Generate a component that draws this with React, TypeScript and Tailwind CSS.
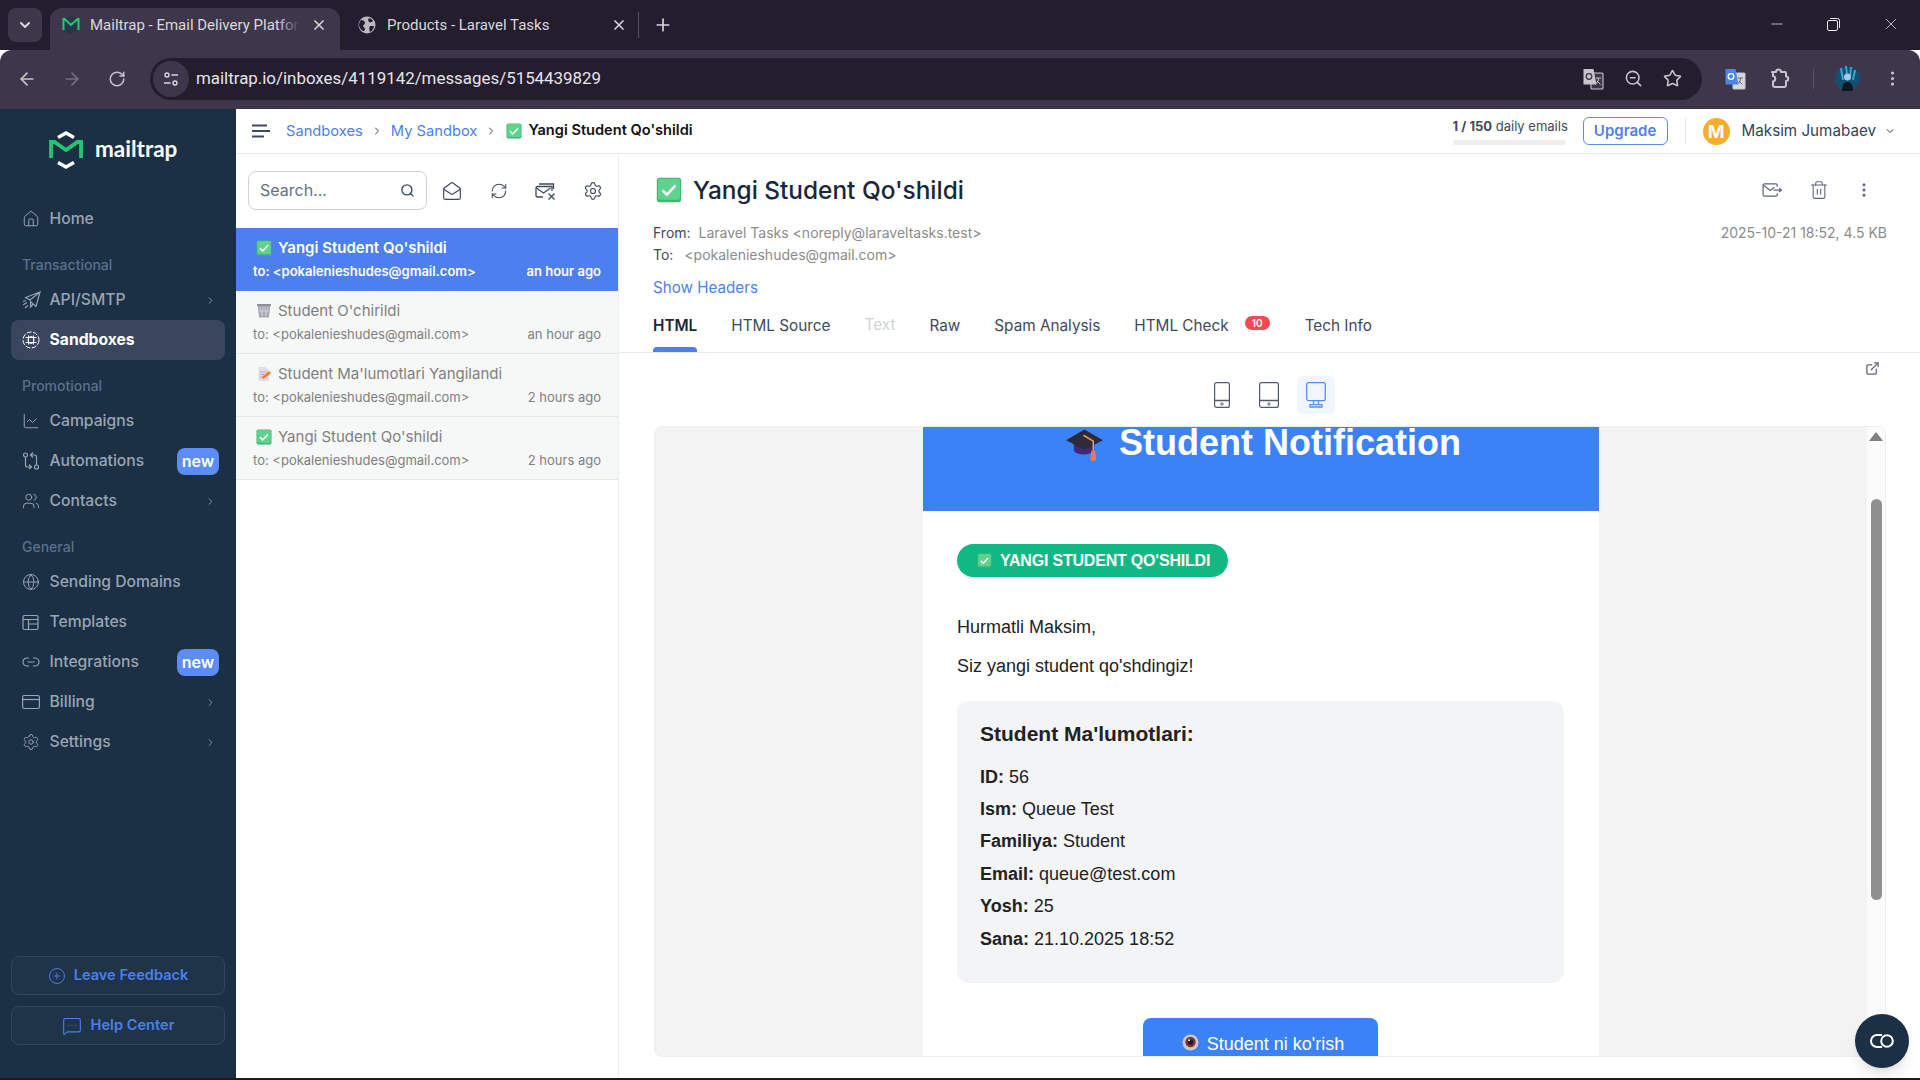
import React from "react";
import {
  ArrowLeft, ArrowRight, RotateCw, X, Plus, ChevronDown, ChevronRight, Search, ZoomOut, Star, MoreVertical,
  Home, Users, Globe, Settings, CirclePlus, MessageSquareMore, MailOpen, RefreshCw, Trash2,
  ExternalLink, ChartLine, Minus,
} from "lucide-react";

const CheckEmoji = ({ size = 16, className = "" }: { size?: number; className?: string }) => (
  <svg width={size} height={size} viewBox="0 0 16 16" className={className}>
    <rect x="0.5" y="0.5" width="15" height="15" rx="1.8" fill="#3fb56f" />
    <rect x="1.2" y="1" width="13.6" height="13" rx="1.4" fill="#5fd38d" />
    <path d="M4 8.2l2.7 2.7L12 5.2" fill="none" stroke="#fff" strokeWidth="1.5" />
  </svg>
);

const TrashEmoji = () => (
  <svg width="16" height="16" viewBox="0 0 16 16">
    <path d="M1.5 1.5h13l-1.6 13h-9.800z" fill="#a8a8b4" />
    <rect x="1" y="1" width="14" height="2" fill="#8f8f9c" />
    <path d="M4 4l2 9M7 4l-1 9M9 4l1 9M12 4l-2 9M3.500 8h9" stroke="#d6d6de" strokeWidth="0.7" />
  </svg>
);

const MemoEmoji = () => (
  <svg width="16" height="16" viewBox="0 0 16 16">
    <path d="M2.500 1h7l3.500 3.500V15h-10.500z" fill="#e4dce4" />
    <path d="M4 6h6M4 8.500h4M4 11h3" stroke="#b59bb0" strokeWidth="0.8" />
    <path d="M6 13l1-3 6-5 2 2-6 5z" fill="#ef7a3a" />
  </svg>
);

const CapEmoji = () => (
  <svg width="37" height="34" viewBox="0 0 38 34">
    <path d="M8 14v9c3 5 17 5 21 0v-9z" fill="#3f2a78" />
    <path d="M0 12L19 1l19 11-19 10z" fill="#2c2a3c" />
    <path d="M18 7l10 6v10" fill="none" stroke="#e8a33a" strokeWidth="1.600" />
    <path d="M26 23h4l1 9c-1 2-5 2-6 0z" fill="#ef7a45" />
  </svg>
);

const EyeEmoji = () => (
  <svg width="17" height="17" viewBox="0 0 18 18">
    <circle cx="9" cy="9" r="8.500" fill="#cfc8c8" />
    <circle cx="9" cy="8.500" r="5.500" fill="#7a3442" />
    <circle cx="9" cy="8.500" r="3" fill="#2a171c" />
    <circle cx="7.500" cy="6.500" r="1" fill="#fff" />
  </svg>
);

const Logo = () => (
  <svg width="34" height="38" viewBox="0 0 34 38">
    <path d="M9 6.500L17 2l8 4.500" fill="none" stroke="#fff" strokeWidth="3.400" />
    <path d="M9 31.500l8 4.500 8-4.500" fill="none" stroke="#fff" strokeWidth="3.400" />
    <path d="M2 27V11h3.500L17 19l11.500-8H32v16" fill="none" stroke="#22c870" strokeWidth="3.800" />
  </svg>
);

const PlaneIcon = () => (
  <svg width="19" height="18" viewBox="0 0 19 18" fill="none" stroke="#9aa5b2" strokeWidth="1.200">
    <path d="M18 1L3.500 6.500l4.500 2.500L18 1l-4 14.500-5.500-5V16l2.500-3" />
    <path d="M1 10.500l3-1M1 14l4-2.500M3 17l3-2.500" />
  </svg>
);

const SandboxIcon = () => (
  <svg width="18" height="18" viewBox="0 0 18 18" fill="none" stroke="#fff" strokeWidth="1">
    <circle cx="9" cy="9" r="8" strokeDasharray="5 1.600" />
    <ellipse cx="9" cy="9" rx="3" ry="3.500" />
    <path d="M3.500 6.500h11M3.500 11.500h11M6.500 4.500v9M11.500 4.500v9" strokeWidth="0.9" />
  </svg>
);

const FlowIcon = () => (
  <svg width="18" height="18" viewBox="0 0 18 18" fill="none" stroke="#9aa5b2" strokeWidth="1.200">
    <circle cx="3.500" cy="3" r="2" />
    <circle cx="14.500" cy="15" r="2" />
    <path d="M3.500 5v8c0 1.500 1 2 2 2H9M7 12.500L9.500 15 7 17" />
    <path d="M14.500 13V5c0-1.500-1-2-2-2H9M11 .5L8.500 3 11 5.500" />
  </svg>
);

const LayoutIcon = () => (
  <svg width="17" height="17" viewBox="0 0 17 17" fill="none" stroke="#9aa5b2" strokeWidth="1.200">
    <rect x="1" y="1.500" width="15" height="14" rx="1.500" />
    <path d="M1 5.500h15M6.500 5.500v10M6.500 10h9.500" />
  </svg>
);

const LinkIcon = () => (
  <svg width="18" height="18" viewBox="0 0 18 18" fill="none" stroke="#9aa5b2" strokeWidth="1.200">
    <path d="M7 5H5a4 4 0 000 8h2M11 5h2a4 4 0 010 8h-2M5.500 9h7" />
  </svg>
);

const BillingIcon = () => (
  <svg width="18" height="18" viewBox="0 0 18 18" fill="none" stroke="#9aa5b2" strokeWidth="1.200">
    <rect x="0.600" y="2.500" width="16.800" height="13" rx="1.500" />
    <path d="M.6 6.500h16.800" />
  </svg>
);

const MailTrashIcon = () => (
  <svg width="22" height="20" viewBox="0 0 22 20" fill="none" stroke="#3d4a5c" strokeWidth="1.300">
    <path d="M8 16H2.500A1.500 1.500 0 011 14.500V7a1.500 1.500 0 011.500-1.500H17V10" />
    <path d="M1.500 7l7 5 7-5M4 3h14.500V8" />
    <path d="M13.500 12.500l6 6M19.500 12.500l-6 6" />
  </svg>
);

const ForwardMail = () => (
  <svg width="21" height="17" viewBox="0 0 22 18" fill="none" stroke="#5b6779" strokeWidth="1.300">
    <path d="M16 5V3.500A1.500 1.500 0 0014.500 2h-12A1.500 1.500 0 001 3.500v10A1.500 1.500 0 002.500 15h12a1.500 1.500 0 001.500-1.500V12" />
    <path d="M1.500 3.500L8.500 9l4.500-3.500" />
    <path d="M12 8.500h8M18 6.500l2.500 2-2.500 2" />
  </svg>
);

const PhoneIcon = ({ wide = false, blue = false }: { wide?: boolean; blue?: boolean }) => (
  <svg width={wide ? 20 : 16} height="26" viewBox={wide ? "0 0 20 26" : "0 0 16 26"} fill="none" stroke={blue ? "#5b8def" : "#4f5b6d"} strokeWidth="1.200">
    <rect x="0.600" y="0.600" width={wide ? 18.8 : 14.8} height="24.800" rx="2" />
    <path d={wide ? "M.6 18.500h18.800" : "M.6 18.500h14.800"} strokeWidth="1.500" />
    <circle cx={wide ? 10 : 8} cy="22" r="1.200" strokeWidth="0.900" />
  </svg>
);

const DesktopIcon = () => (
  <svg width="20" height="26" viewBox="0 0 20 26" fill="none" stroke="#5b8def" strokeWidth="1.300">
    <rect x="0.700" y="0.700" width="18.600" height="18" rx="2" />
    <path d="M7.500 18.700v4M12.500 18.700v4M4 25h12v-2.300H4z" />
  </svg>
);

const TranslateIcon = ({ accent = false }: { accent?: boolean }) => (
  <svg width="22" height="22" viewBox="0 0 22 22">
    <rect x="9" y="5" width="12" height="16" rx="1" fill={accent ? "#d8d8dc" : "#3e364a"} stroke="#c7c5cb" strokeWidth="1.100" />
    <path d="M1.500 1h10l3 15.500h-13z" fill={accent ? "#4a86e8" : "#c7c5cb"} />
    <circle cx="7" cy="8.500" r="2.800" fill="none" stroke={accent ? "#fff" : "#3e364a"} strokeWidth="1.300" />
    <path d="M14 10h5M16.500 10c0 3-1.500 5-3 6M15 13l3.500 3.500" fill="none" stroke={accent ? "#666" : "#c7c5cb"} strokeWidth="1" />
  </svg>
);

const PuzzleIcon = () => (
  <svg width="21" height="21" viewBox="0 0 21 21" fill="none" stroke="#c7c5cb" strokeWidth="2">
    <path d="M2 4h4a2.500 2.500 0 015 0h4a1 1 0 011 1v3.500a2.200 2.200 0 010 4.400V17a2 2 0 01-2 2H5a2 2 0 01-2-2v-3.500a2.800 2.800 0 000-5.500V5z" strokeLinejoin="round" />
  </svg>
);

const RestoreIcon = () => (
  <svg width="13" height="13" viewBox="0 0 13 13" fill="none" stroke="#e8e6ea" strokeWidth="1">
    <rect x="0.500" y="2.500" width="10" height="10" rx="1.500" />
    <path d="M3 .5h7.500A2 2 0 0112.500 2.500V10" />
  </svg>
);

const TuneIcon = () => (
  <svg width="16" height="16" viewBox="0 0 16 16" fill="none" stroke="#d9d7dc" strokeWidth="1.400">
    <circle cx="4" cy="4" r="2" />
    <path d="M8.500 4H15M1 12h6.500" />
    <circle cx="12" cy="12" r="2" />
  </svg>
);

const ChatIcon = () => (
  <svg width="24" height="14" viewBox="0 0 24 14" fill="none" stroke="#fff" strokeWidth="2">
    <path d="M12 1H7a6 6 0 000 12h5" />
    <circle cx="17" cy="7" r="5.800" />
  </svg>
);

const TabGlobe = () => (
  <svg width="18" height="18" viewBox="0 0 18 18" className="flex-none">
    <circle cx="9" cy="9" r="8.500" fill="#bbb9c0" />
    <path d="M3 4c2 0 4 1 4 3s-2 1.500-2 3 2 1 2 3-1 2-2 2c-2-1-4-4-4-6 0-2 1-4 2-5zM11 2c2 1 3 1 4 3-1 1-3 2-4 1s-1-3 0-4zM12 10h4c0 2-2 5-4 6-1-2-1-5 0-6z" fill="#231d2e" />
  </svg>
);

const TabMailtrap = () => (
  <svg width="20" height="20" viewBox="0 0 20 20" fill="none" className="flex-none">
    <path d="M10 1l8 4.500v9L10 19l-8-4.500v-9z" fill="#27374c" />
    <path d="M2.500 15V4h1l6.500 6 6.500-6h1v11" stroke="#22c870" strokeWidth="2" />
  </svg>
);

const Avatar = () => (
  <svg width="25" height="25" viewBox="0 0 25 25">
    <circle cx="12.500" cy="12.500" r="12.500" fill="#14506e" />
    <path d="M6 2l2 12M11 0l1 9M16 1l-1 10M20 4l-2 10" stroke="#3aa5d8" strokeWidth="2" />
    <path d="M7 25c0-6 2-9 5.500-9s5.500 3 5.500 9z" fill="#0f1624" />
    <circle cx="12.500" cy="11" r="3.500" fill="#a8c8e8" />
  </svg>
);

function NavItem({ icon, label, chevron, badge, active }: { icon: React.ReactNode; label: string; chevron?: boolean; badge?: boolean; active?: boolean }) {
  return (
    <div className={`mx-[11px] h-10 flex items-center pl-[11px] pr-[6px] rounded-lg text-[15.700px] ${active ? "bg-[#3a465e] text-white font-bold" : "text-[#99a5b2] font-medium"}`}>
      <span className="w-[28px] flex-none flex items-center">{icon}</span>
      <span className="flex-1 -ml-[0.5px]">{label}</span>
      {chevron && <ChevronRight size={11} className="text-[#8d99a8] mr-[3px]" />}
      {badge && <span className="w-[42px] h-[27px] rounded-lg bg-[#5b8cf7] text-white text-[16px] font-semibold flex items-center justify-center">new</span>}
    </div>
  );
}

const SectionLabel = ({ children }: { children: React.ReactNode }) => (
  <div className="h-[41px] flex items-end pb-[5px] pl-[22px] text-[14px] font-medium text-[#5a718c]">{children}</div>
);

function MailRow({ icon, title, time, selected }: { icon: React.ReactNode; title: string; time: string; selected?: boolean }) {
  return (
    <div className={`h-[63px] px-[17px] pt-[8px] border-b ${selected ? "bg-[#4d7fee] text-white border-[#4d7fee] font-semibold" : "bg-[#f6f7f7] text-[#7f7f7f] border-[#e6e8e8]"}`}>
      <div className="flex items-center h-[24px] text-[15px]">
        <span className="w-[25px] pl-[3px] flex-none">{icon}</span>
        <span>{title}</span>
      </div>
      <div className="flex justify-between mt-[2px] h-[20px] items-center text-[13px]">
        <span>to: &lt;pokalenieshudes@gmail.com&gt;</span>
        <span>{time}</span>
      </div>
    </div>
  );
}

const Tab = ({ children, active }: { children: React.ReactNode; active?: boolean }) => (
  <div className={`relative h-[47px] flex items-center pb-[4px] text-[15.300px] ${active ? "font-semibold text-[#17283b]" : "text-[#3d4a5c]"}`}>
    {children}
    {active && <span className="absolute left-0 right-0 bottom-0 h-[5px] rounded-t bg-[#4d7fee]" />}
  </div>
);

const Field = ({ label, value }: { label: string; value: string }) => (
  <div className="h-[32.4px] flex items-center text-[18px] text-[#222]">
    <b className="mr-[5px]">{label}</b>
    {value}
  </div>
);

export default function App() {
  return (
    <div className="w-[1920px] h-[1080px] overflow-hidden flex flex-col bg-white font-['Inter',sans-serif]">
      {/* browser chrome */}
      <div className="h-[50px] flex-none bg-[#231d2e] flex items-end text-[#d9d7dc] font-['Roboto',sans-serif] text-[15px]">
        <div className="w-[34px] h-[34px] ml-2 mb-2 rounded-lg bg-[#3e364a] flex items-center justify-center">
          <ChevronDown size={16} strokeWidth={3} />
        </div>
        <div className="w-[290px] h-[42px] ml-2 rounded-t-xl bg-[#3e364a] flex items-center pl-[11px] pr-[13px] pb-[8px]">
          <TabMailtrap />
          <span className="relative ml-[9px] w-[210px] overflow-hidden whitespace-nowrap">
            Mailtrap - Email Delivery Platform
            <span className="absolute right-0 top-0 bottom-0 w-[22px] bg-gradient-to-r from-transparent to-[#3e364a]" />
          </span>
          <X size={16} className="ml-auto" strokeWidth={2.500} />
        </div>
        <div className="w-[298px] h-[42px] flex items-center pl-[18px] pr-[11px] pb-[8px]">
          <TabGlobe />
          <span className="ml-[11px]">Products - Laravel Tasks</span>
          <X size={16} className="ml-auto" strokeWidth={2.500} />
        </div>
        <div className="w-px h-[26px] bg-[#564e62] mb-[12px]" />
        <Plus size={20} className="ml-[14px] mb-[15px]" />
        <div className="ml-auto flex items-center h-full pb-[2px]">
          <Minus size={18} strokeWidth={1} className="mr-[41px] text-[#e8e6ea]" />
          <span className="mr-[42px]"><RestoreIcon /></span>
          <X size={18} strokeWidth={1} className="mr-[20px] text-[#e8e6ea]" />
        </div>
      </div>
      <div className="h-[59px] flex-none bg-[#3e364a] rounded-t-xl flex items-center text-[#c7c5cb] pb-[2px]">
        <ArrowLeft size={20} className="ml-[17px]" />
        <ArrowRight size={20} className="ml-[25px] text-[#756e80]" />
        <RotateCw size={18} className="ml-[26px]" />
        <div className="ml-[24px] w-[1552px] h-[42px] rounded-full bg-[#231d2e] flex items-center">
          <span className="ml-[3px] w-9 h-9 rounded-full bg-[#3e364a] flex items-center justify-center"><TuneIcon /></span>
          <span className="ml-[7px] mt-[1px] text-[16.900px] text-[#e6e4e8] font-['Roboto',sans-serif]">mailtrap.io/inboxes/4119142/messages/5154439829</span>
          <div className="ml-auto flex items-center gap-[20px] pr-[20px]">
            <TranslateIcon />
            <ZoomOut size={19} />
            <Star size={19} />
          </div>
        </div>
        <span className="ml-[22px]"><TranslateIcon accent /></span>
        <span className="ml-[24px]"><PuzzleIcon /></span>
        <div className="ml-[22px] w-px h-[20px] bg-[#5c5468]" />
        <span className="ml-[21px]"><Avatar /></span>
        <MoreVertical size={19} className="ml-[23px]" />
      </div>

      <div className="flex-1 min-h-0 flex">
        {/* sidebar */}
        <aside className="w-[236px] flex-none bg-[#1b2f45] flex flex-col pb-[33px]">
          <div className="h-[90px] flex-none flex items-start pl-[49px] pt-[22px]">
            <Logo />
            <span className="ml-[12px] mt-[3px] text-[22.500px] leading-[30px] font-bold text-white font-['Lato',sans-serif]">mailtrap</span>
          </div>
          <NavItem icon={<Home size={18} strokeWidth={1.300} className="text-[#9aa5b2]" />} label="Home" />
          <SectionLabel>Transactional</SectionLabel>
          <NavItem icon={<PlaneIcon />} label="API/SMTP" chevron />
          <NavItem icon={<SandboxIcon />} label="Sandboxes" active />
          <SectionLabel>Promotional</SectionLabel>
          <NavItem icon={<ChartLine size={18} strokeWidth={1.300} className="text-[#9aa5b2]" />} label="Campaigns" />
          <NavItem icon={<FlowIcon />} label="Automations" badge />
          <NavItem icon={<Users size={18} strokeWidth={1.300} className="text-[#9aa5b2]" />} label="Contacts" chevron />
          <SectionLabel>General</SectionLabel>
          <NavItem icon={<Globe size={18} strokeWidth={1.300} className="text-[#9aa5b2]" />} label="Sending Domains" />
          <NavItem icon={<LayoutIcon />} label="Templates" />
          <NavItem icon={<LinkIcon />} label="Integrations" badge />
          <NavItem icon={<BillingIcon />} label="Billing" chevron />
          <NavItem icon={<Settings size={18} strokeWidth={1.300} className="text-[#9aa5b2]" />} label="Settings" chevron />
          <div className="mt-auto mx-[11px] h-[39px] rounded-lg border border-[#34465c] bg-[#1f3349] flex items-center justify-center gap-[8px] text-[14.600px] font-semibold text-[#4a80ea]">
            <CirclePlus size={18} strokeWidth={1.300} /> Leave Feedback
          </div>
          <div className="mt-[11px] mx-[11px] h-[39px] rounded-lg border border-[#34465c] bg-[#1f3349] flex items-center justify-center gap-[9px] text-[14.600px] font-semibold text-[#4a80ea]">
            <MessageSquareMore size={20} strokeWidth={1.300} /> Help Center
          </div>
        </aside>

        <div className="flex-1 min-w-0 flex flex-col">
          {/* top bar */}
          <header className="h-[45px] flex-none border-b border-[#e8e9ea] flex items-center pl-[16px] pr-[24px] text-[14.700px]">
            <svg width="18" height="14" viewBox="0 0 18 14" stroke="#3d4a5c" strokeWidth="2"><path d="M0 1.500h15M0 7h18M0 12.500h12" /></svg>
            <span className="ml-[16px] text-[#4f7fe8]">Sandboxes</span>
            <ChevronRight size={12} className="mx-[8px] text-[#3d4a5c]" />
            <span className="text-[#4f7fe8]">My Sandbox</span>
            <ChevronRight size={12} className="ml-[8px] mr-[9px] text-[#3d4a5c]" />
            <CheckEmoji size={16} />
            <span className="ml-[6px] text-[14.600px] font-semibold text-[#111]">Yangi Student Qo'shildi</span>
            <div className="ml-auto flex flex-col w-[113px] text-[13px] text-[#3d4a5c] leading-[18px] mb-[1px]">
              <span className="whitespace-nowrap"><b className="font-bold">1 / 150</b> daily emails</span>
              <span className="h-[5px] mt-[5px] rounded bg-[#eeeeee]" />
            </div>
            <div className="ml-[17px] w-[85px] h-[28px] rounded-md border border-[#5b8cf0] text-[#4f7fe8] text-[15px] font-semibold flex items-center justify-center">Upgrade</div>
            <div className="ml-[17px] w-px h-[26px] bg-[#e8e9ea]" />
            <span className="ml-[17px] w-[27px] h-[27px] rounded-full bg-[#f5ad2a] text-white font-bold text-[18px] flex items-center justify-center">M</span>
            <span className="ml-[12px] text-[15.200px] text-[#33445a]">Maksim Jumabaev</span>
            <ChevronDown size={12} className="ml-[8px] text-[#33445a]" />
          </header>

          <div className="flex-1 min-h-0 flex">
            {/* mail list */}
            <div className="w-[383px] flex-none border-r border-[#eceded] flex flex-col">
              <div className="h-[74px] flex-none flex items-start pt-[17px] pl-[12px]">
                <div className="w-[179px] h-[39px] rounded-lg border border-[#cfd2d4] flex items-center justify-between px-[11px] pb-[1px] text-[16px] text-[#66717e]">
                  Search...
                  <Search size={15} strokeWidth={2.200} className="text-[#3d4a5c]" />
                </div>
                <div className="ml-[15px] h-[39px] flex items-center gap-[27px] text-[#3d4a5c]">
                  <MailOpen size={20} strokeWidth={1.400} />
                  <span className="ml-[1px]"><RefreshCw size={18} strokeWidth={1.400} /></span>
                  <MailTrashIcon />
                  <Settings size={20} strokeWidth={1.400} className="-ml-[1px]" />
                </div>
              </div>
              <MailRow selected icon={<CheckEmoji />} title="Yangi Student Qo'shildi" time="an hour ago" />
              <MailRow icon={<TrashEmoji />} title="Student O'chirildi" time="an hour ago" />
              <MailRow icon={<MemoEmoji />} title="Student Ma'lumotlari Yangilandi" time="2 hours ago" />
              <MailRow icon={<CheckEmoji />} title="Yangi Student Qo'shildi" time="2 hours ago" />
            </div>

            {/* message */}
            <main className="flex-1 min-w-0 flex flex-col relative">
              <div className="pl-[34px] pt-[23px] pr-[33px]">
                <div className="flex items-center h-[26px]">
                  <CheckEmoji size={26} className="ml-[3px]" />
                  <h1 className="ml-[11px] text-[24.400px] font-medium text-[#17283b]">Yangi Student Qo'shildi</h1>
                  <div className="ml-auto flex items-center gap-[26px] pr-[14px]">
                    <ForwardMail />
                    <Trash2 size={20} strokeWidth={1.300} className="text-[#5b6779]" />
                    <MoreVertical size={18} className="text-[#5b6779]" />
                  </div>
                </div>
                <div className="mt-[19px] flex justify-between text-[14px] leading-[22px]">
                  <div>
                    <div className="text-[#3d4a5c]">From: <span className="ml-[4px] text-[#8b8b8b]">Laravel Tasks &lt;noreply@laraveltasks.test&gt;</span></div>
                    <div className="text-[#3d4a5c]">To: <span className="ml-[7px] text-[#8b8b8b]">&lt;pokalenieshudes@gmail.com&gt;</span></div>
                  </div>
                  <span className="text-[#8b8b8b]">2025-10-21 18:52, 4.5 KB</span>
                </div>
                <div className="mt-[11px] text-[15.200px] leading-[22px] text-[#4f7fe8]">Show Headers</div>
              </div>
              <div className="mt-[4px] px-[34px] border-b border-[#e8e9ea] flex items-start gap-[34px] h-[50px] pt-[2px]">
                <Tab active>HTML</Tab>
                <Tab>HTML Source</Tab>
                <Tab><span className="text-[#cfd2d4] -mt-[2px]">Text</span></Tab>
                <Tab>Raw</Tab>
                <Tab>Spam Analysis</Tab>
                <Tab>
                  HTML Check
                  <span className="absolute -right-[41px] top-[11px] w-[25px] h-[14px] rounded-full bg-[#f04a50] text-white text-[10px] font-semibold flex items-center justify-center">10</span>
                </Tab>
                <span className="ml-[42px]"><Tab>Tech Info</Tab></span>
              </div>
              <ExternalLink size={15} className="absolute right-[40px] top-[207px] text-[#5b6779]" />
              <div className="h-[73px] flex-none flex items-center justify-center gap-[9px] pt-[10px] pr-[2px]">
                <span className="w-[38px] h-[38px] flex items-center justify-center"><PhoneIcon /></span>
                <span className="w-[38px] h-[38px] flex items-center justify-center"><PhoneIcon wide /></span>
                <span className="w-[38px] h-[38px] rounded-md bg-[#f1f5fd] flex items-center justify-center"><DesktopIcon /></span>
              </div>

              {/* preview */}
              <div className="ml-[35px] mr-[34px] h-[631px] flex-none rounded-lg border border-[#eeeeee] bg-[#f3f3f3] overflow-hidden flex font-['Liberation_Sans',sans-serif]">
                <div className="flex-1 min-w-0 flex justify-center">
                  <div className="w-[676px] h-[640px] -mt-px flex-none bg-white">
                    <div className="h-[85px] bg-[#3b82f6] flex items-start justify-center pl-[5px] text-white text-[36px] leading-[34px] font-bold">
                      <span className="mt-[2px] mr-[16px]"><CapEmoji /></span>
                      Student Notification
                    </div>
                    <div className="px-[34px] pt-[33px]">
                      <div className="w-[271px] h-[33px] rounded-full bg-[#10b981] text-white text-[16px] font-bold flex items-center pl-[20px] gap-[8px]">
                        <CheckEmoji size={15} />
                        <span className="tracking-[-0.2px]">YANGI STUDENT QO'SHILDI</span>
                      </div>
                      <p className="mt-[36px] text-[18px] leading-[28px] text-[#222]">Hurmatli Maksim,</p>
                      <p className="mt-[11px] text-[18px] leading-[28px] text-[#222]">Siz yangi student qo'shdingiz!</p>
                      <div className="mt-[21px] w-[607px] h-[282px] rounded-xl bg-[#f3f4f6] px-[23px] pt-[20px]">
                        <h2 className="text-[21px] leading-[26px] font-bold text-[#222] mb-[14px]">Student Ma'lumotlari:</h2>
                        <Field label="ID:" value="56" />
                        <Field label="Ism:" value="Queue Test" />
                        <Field label="Familiya:" value="Student" />
                        <Field label="Email:" value="queue@test.com" />
                        <Field label="Yosh:" value="25" />
                        <Field label="Sana:" value="21.10.2025 18:52" />
                      </div>
                      <div className="mt-[35px] ml-[186px] w-[235px] h-[60px] rounded-t-lg bg-[#3b82f6] text-white text-[18px] flex items-start justify-center pt-[13px] pl-[5px] gap-[8px]">
                        <span className="mt-[3px]"><EyeEmoji /></span>
                        Student ni ko'rish
                      </div>
                    </div>
                  </div>
                </div>
                <div className="w-[18px] flex-none bg-[#fbfbfb] flex flex-col items-center">
                  <span className="mt-[5px] w-0 h-0 border-x-[7px] border-x-transparent border-b-[9px] border-b-[#7f7f7f]" />
                  <span className="mt-[58px] w-[11px] h-[401px] rounded-full bg-[#8f8f8f]" />
                </div>
              </div>

              <div className="absolute right-[11px] bottom-[10px] w-[54px] h-[54px] rounded-full bg-[#1b2f45] shadow-lg flex items-center justify-center">
                <ChatIcon />
              </div>
            </main>
          </div>
        </div>
      </div>
      <div className="h-[2px] flex-none bg-[#1c1a1c]" />
    </div>
  );
}
